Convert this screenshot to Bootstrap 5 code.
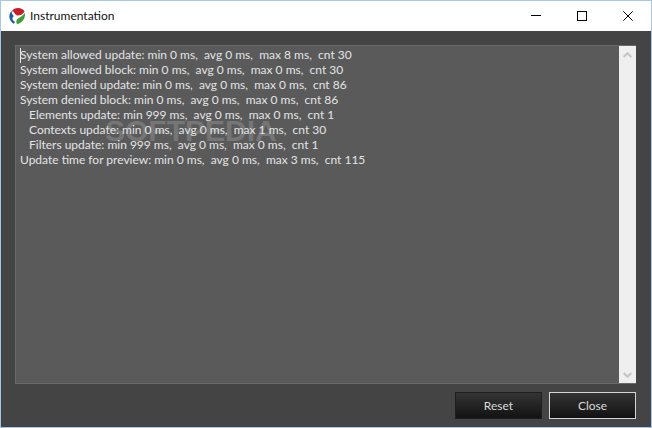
<!DOCTYPE html>
<html lang="en">
<head>
<meta charset="utf-8">
<title>Instrumentation</title>
<link href="https://cdn.jsdelivr.net/npm/bootstrap@5.3.0/dist/css/bootstrap.min.css" rel="stylesheet">
<style>
html,body{height:100%;margin:0;overflow:hidden}
body{font-family:Lato,"Open Sans",sans-serif;font-size:12px;background:#444}
.win-frame{width:652px;height:428px;border:1px solid #a6c8e8;background:#444}
.title-strip{height:30px;background:#fff;padding-left:8px;color:#111;font-size:12px}
.title-label{margin-left:5px;font-family:Lato,sans-serif}
.win-btn{width:46px;height:30px}
.dialog-area{flex:1;padding:14px 15px 8px 14px;min-height:0}
.log-box{flex:1;min-height:0;background:#5a5a5a;border:1px solid #6a6a6a;border-right:0;position:relative}
.log-text{flex:1;padding:1px 0 0 4px;color:#e2e4e6;line-height:15px;font-size:12px;white-space:pre;position:relative;font-family:Lato,sans-serif}
.log-line{position:relative;z-index:1}
.log-indent{padding-left:9px}
.caret-mark{position:absolute;left:4px;top:2px;width:1px;height:15px;background:#e8e8e8}
.scroll-rail{width:17px;background:#efefef}
.scroll-end{height:17px}
.water-mark{position:absolute;left:89px;top:70px;font:700 30px/30px "Liberation Sans",sans-serif;color:#767676;pointer-events:none}
.foot-row{padding-top:8px;gap:7px}
.dark-btn{width:87px;height:27px;padding:0;border-radius:0;border:1px solid #1f1f1f;background:linear-gradient(#343434,#121212);color:#dadada;font-size:12px;font-family:Lato,sans-serif}
.dark-btn-focus{border-color:#d4d4d4}
</style>
</head>
<body>
<div class="win-frame d-flex flex-column">
  <div class="title-strip d-flex align-items-center flex-shrink-0">
    <svg width="16" height="16" viewBox="0 0 16 16" aria-hidden="true">
      <path d="M2.500 3.500C4 1 6.500 0 9 0c3 0 5.500 1.500 6.500 3.500C13.500 6.500 11 7.500 9 7.500 7 7.500 5.500 5.500 4.500 3.500z" fill="#c81e2a"/>
      <path d="M2.500 3C.8 5 0 7.500.5 10c.5 2.500 2.500 5 4.500 5.800L6 14C4 13 3 11 3.500 9.500 4.500 9 5 8 4 7 2.800 6 2.800 4.500 2.500 3z" fill="#1c5aa6"/>
      <path d="M16 5c.3 3.500-1 6.500-3 8.500-1.500 1.500-3 2.200-5 2.500-.8-1.500-1-3 0-4.500C9 10 12 9.500 16 5z" fill="#3f9e35"/>
    </svg>
    <span class="title-label flex-grow-1">Instrumentation</span>
    <div class="win-btn d-flex align-items-center justify-content-center">
      <svg width="10" height="10" viewBox="0 0 10 10"><path d="M0 4.500H10" stroke="#000"/></svg>
    </div>
    <div class="win-btn d-flex align-items-center justify-content-center">
      <svg width="10" height="10" viewBox="0 0 10 10"><rect x=".5" y=".5" width="9" height="9" fill="none" stroke="#000"/></svg>
    </div>
    <div class="win-btn d-flex align-items-center justify-content-center">
      <svg width="10" height="10" viewBox="0 0 10 10"><path d="M.3.3 9.700 9.700M9.700.3.3 9.700" stroke="#000"/></svg>
    </div>
  </div>
  <div class="dialog-area d-flex flex-column">
    <div class="log-box d-flex">
      <div class="log-text"><span class="caret-mark"></span><span class="water-mark">SOFTPEDIA</span><div class="log-line">System allowed update: min 0 ms,  avg 0 ms,  max 8 ms,  cnt 30</div><div class="log-line">System allowed block: min 0 ms,  avg 0 ms,  max 0 ms,  cnt 30</div><div class="log-line">System denied update: min 0 ms,  avg 0 ms,  max 0 ms,  cnt 86</div><div class="log-line">System denied block: min 0 ms,  avg 0 ms,  max 0 ms,  cnt 86</div><div class="log-line log-indent">Elements update: min 999 ms,  avg 0 ms,  max 0 ms,  cnt 1</div><div class="log-line log-indent">Contexts update: min 0 ms,  avg 0 ms,  max 1 ms,  cnt 30</div><div class="log-line log-indent">Filters update: min 999 ms,  avg 0 ms,  max 0 ms,  cnt 1</div><div class="log-line">Update time for preview: min 0 ms,  avg 0 ms,  max 3 ms,  cnt 115</div></div>
      <div class="scroll-rail d-flex flex-column justify-content-between flex-shrink-0">
        <div class="scroll-end d-flex align-items-center justify-content-center"><svg width="9" height="6" viewBox="0 0 9 6"><path d="M.7 5 4.500 1.200 8.300 5" fill="none" stroke="#c4c4c4" stroke-width="2"/></svg></div>
        <div class="scroll-end d-flex align-items-center justify-content-center"><svg width="9" height="6" viewBox="0 0 9 6"><path d="M.7 1 4.500 4.800 8.300 1" fill="none" stroke="#c4c4c4" stroke-width="2"/></svg></div>
      </div>
    </div>
    <div class="foot-row d-flex justify-content-end flex-shrink-0">
      <button type="button" class="btn dark-btn">Reset</button>
      <button type="button" class="btn dark-btn dark-btn-focus">Close</button>
    </div>
  </div>
</div>
</body>
</html>
